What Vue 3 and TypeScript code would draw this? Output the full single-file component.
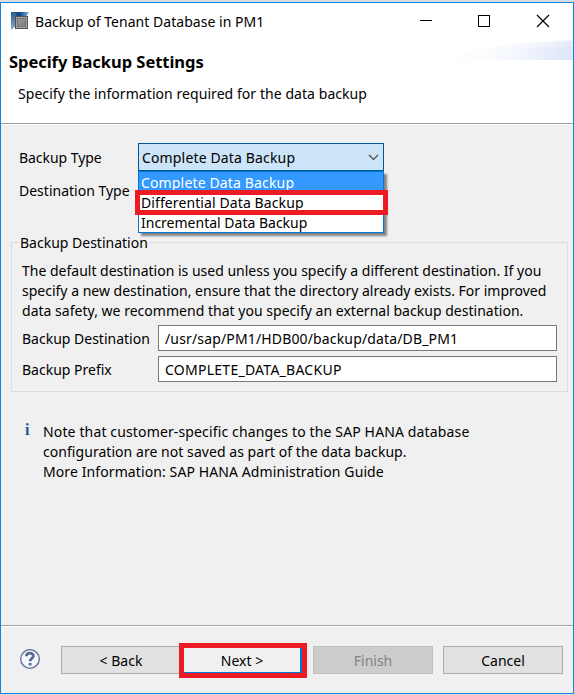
<script setup lang="ts">
import { ref } from 'vue'

const backupTypes = ['Complete Data Backup', 'Differential Data Backup', 'Incremental Data Backup']
const backupType = ref(backupTypes[0])
const destination = ref('/usr/sap/PM1/HDB00/backup/data/DB_PM1')
const prefix = ref('COMPLETE_DATA_BACKUP')
</script>

<template>
  <div class="screen">
    <div class="window">
      <header class="banner">
        <div class="titlebar">
          <svg class="app-icon" width="18" height="18" viewBox="0 0 18 18">
            <defs>
              <linearGradient id="sky" x1="0" y1="0" x2="1" y2="0">
                <stop offset="0" stop-color="#2a5a8c" />
                <stop offset=".5" stop-color="#12478a" />
                <stop offset="1" stop-color="#8db4d6" />
              </linearGradient>
              <linearGradient id="edge" x1="0" y1="0" x2="0" y2="1">
                <stop offset="0" stop-color="#2a5a8c" />
                <stop offset="1" stop-color="#8fb2cf" />
              </linearGradient>
              <linearGradient id="steel" x1="0" y1="0" x2="1" y2="1">
                <stop offset="0" stop-color="#9c9c9c" />
                <stop offset="1" stop-color="#7c7c7c" />
              </linearGradient>
            </defs>
            <path d="M0 0H18L15 5H0Z" fill="url(#sky)" />
            <path d="M0 0H5V14L0 18Z" fill="url(#edge)" />
            <rect x="4" y="4" width="13" height="13" fill="#505458" />
            <rect x="5" y="5" width="11" height="11" fill="#a3a3a3" />
            <rect x="6.5" y="6.5" width="8" height="8" fill="url(#steel)" stroke="#747474" />
          </svg>
          <span class="title">Backup of Tenant Database in PM1</span>
          <svg class="controls" width="130" height="14" viewBox="0 0 130 14" fill="none" stroke="#000" shape-rendering="crispEdges">
            <path d="M0 6.5H12" />
            <rect x="58.5" y="1.5" width="11" height="11" />
            <path d="M117 1L129 13M129 1L117 13" shape-rendering="auto" stroke-width="1.2" />
          </svg>
        </div>
        <svg class="swoosh" width="138" height="20" viewBox="0 0 138 20">
          <defs>
            <linearGradient id="haze" x1="0" y1="0" x2="1" y2="0">
              <stop offset="0" stop-color="#fff" />
              <stop offset=".4" stop-color="#fbfcfe" />
              <stop offset="1" stop-color="#ebf0fb" />
            </linearGradient>
            <linearGradient id="wave" x1="0" y1="0" x2="1" y2="0">
              <stop offset="0" stop-color="#f8faff" stop-opacity="0" />
              <stop offset="1" stop-color="#dce3f8" />
            </linearGradient>
          </defs>
          <path d="M0 20Q55 3 138 0V20Z" fill="url(#haze)" />
          <path d="M45 20Q85 6 138 1V20Z" fill="url(#wave)" opacity=".4" />
          <path d="M48 20V13Q90 7 138 7V20Z" fill="url(#wave)" opacity=".75" />
        </svg>
        <h1>Specify Backup Settings</h1>
        <p class="subtitle">Specify the information required for the data backup</p>
      </header>

      <main>
        <div class="row type-row">
          <label>Backup Type</label>
          <div class="combo">
            <span class="wide">{{ backupType }}</span>
            <svg width="11" height="7" viewBox="0 0 11 7" fill="none" stroke="#444" stroke-width="1.1">
              <path d="M1 1L5.5 5.5L10 1" />
            </svg>
            <ul class="list">
              <li
                v-for="(name, i) in backupTypes"
                :key="name"
                :class="{ selected: name === backupType, wide: i === 0, roomy: i === 1 }"
                @click.stop="backupType = name"
              >{{ name }}</li>
            </ul>
            <div class="mark mark-option"></div>
          </div>
        </div>
        <div class="row dest-type"><label>Destination Type</label></div>

        <section class="group">
          <h2>Backup Destination</h2>
          <p class="description">
            <span>The default destination is used unless you specify a different destination. If you</span>
            <span>specify a new destination, ensure that the directory already exists. For improved</span>
            <span class="d3">data safety, we recommend that you specify an external backup destination.</span>
          </p>
          <div class="field">
            <label>Backup Destination</label>
            <input v-model="destination" class="path" type="text" spellcheck="false" />
          </div>
          <div class="field">
            <label>Backup Prefix</label>
            <input v-model="prefix" class="prefix" type="text" spellcheck="false" />
          </div>
        </section>

        <div class="note">
          <span class="info">i</span>
          <p>
            <span class="n1">Note that customer-specific changes to the SAP HANA database</span>
            <span class="n2">configuration are not saved as part of the data backup.</span>
            <span class="n3">More Information: SAP HANA Administration Guide</span>
          </p>
        </div>
      </main>

      <footer>
        <svg class="help" width="22" height="22" viewBox="0 0 22 22" fill="none" stroke="#566b93">
          <circle cx="11" cy="11" r="9.3" fill="#f6f7fa" stroke-width="1.3" />
          <path d="M7.4 8.3C7.4 4 14.4 4.2 14.4 8C14.4 10.4 11.1 10.4 11.1 13.2" stroke-width="2.7" />
          <path d="M9.7 16.2H12.5" stroke-width="2.6" />
        </svg>
        <button type="button" class="back">&lt; Back</button>
        <div class="next-wrap">
          <button type="button" class="next">Next &gt;</button>
          <div class="mark mark-next"></div>
        </div>
        <button type="button" class="finish" disabled>Finish</button>
        <button type="button" class="cancel">Cancel</button>
      </footer>
    </div>
  </div>
</template>

<style>
body {
  overflow: hidden;
}
</style>

<style scoped>
.screen,
.screen * {
  box-sizing: border-box;
}
.screen {
  width: 574px;
  height: 695px;
  padding: 2px 0 1px;
  background: #d9dce0;
  font: 14px/20px "Noto Sans", "Open Sans", sans-serif;
  color: #000;
}
h1, h2, p, ul {
  margin: 0;
  padding: 0;
}
.window {
  display: flex;
  flex-direction: column;
  height: 692px;
  border: 1px solid #1883d7;
  background: #f0f0f0;
}
.banner {
  position: relative;
  height: 122px;
  background: #fff;
  border-bottom: 1px solid #fff;
  box-shadow: inset 0 -1px #a0a0a0;
}
.titlebar {
  display: flex;
  align-items: flex-start;
  height: 37px;
  padding: 9px 23px 0 10px;
}
.app-icon {
  flex: none;
}
.title {
  flex: 1;
  margin-left: 6px;
  letter-spacing: 0.03px;
}
.controls {
  margin-top: 2px;
}
.swoosh {
  position: absolute;
  top: 37px;
  right: 0;
}
h1 {
  position: relative;
  margin: 12px 0 0 8px;
  font-size: 16.5px;
  font-weight: 700;
  line-height: 20px;
  letter-spacing: -0.04px;
}
.subtitle {
  margin: 12px 0 0 17px;
  letter-spacing: 0.06px;
}
main {
  flex: 1;
  padding: 18px 5px 0 10px;
}
.row {
  display: flex;
  align-items: center;
  padding-left: 8px;
}
.row label {
  width: 119px;
}
.type-row label {
  padding-top: 2px;
  letter-spacing: -0.05px;
}
.dest-type {
  margin-top: 10px;
}
.combo {
  position: relative;
  display: flex;
  align-items: center;
  justify-content: space-between;
  width: 246px;
  height: 28px;
  padding: 1px 4px 0 3px;
  border: 1px solid #00559b;
  background: #cce4f7;
}
.wide {
  letter-spacing: 0.15px;
}
.roomy {
  letter-spacing: 0.1px;
}
.list {
  position: absolute;
  z-index: 1;
  top: 27px;
  left: -1px;
  width: 246px;
  height: 62px;
  border: 1px solid #0078d7;
  background: #fff;
  box-shadow: 3px 3px 2px rgba(0, 0, 0, 0.45);
  list-style: none;
}
.list li {
  height: 20px;
  padding-left: 2px;
  line-height: 21px;
}
.list .selected {
  background: #3399ff;
  color: #fff;
}
.mark {
  position: absolute;
  z-index: 2;
  border: 5px solid #ed1c24;
  pointer-events: none;
}
.mark-option {
  top: 46px;
  left: -4px;
  width: 253px;
  height: 25px;
}
.group {
  margin-top: 41px;
  height: 150px;
  padding: 0 10px;
  border: 1px solid #dcdcdc;
}
h2 {
  width: max-content;
  margin: -10px 0 0 -4px;
  padding: 0 2px;
  background: #f0f0f0;
  font-size: 14px;
  font-weight: 400;
  line-height: 20px;
}
.description {
  margin-top: 8px;
}
.description span,
.note p span {
  display: block;
  white-space: nowrap;
}
.d3 {
  letter-spacing: 0.02px;
}
.field {
  display: flex;
  align-items: center;
  margin-top: 5px;
}
.description + .field {
  margin-top: 4px;
}
.field label {
  width: 136px;
  padding-top: 2px;
}
.field input {
  flex: 1;
  height: 26px;
  padding: 1px 6px 0;
  border: 1px solid #7a7a7a;
  border-radius: 0;
  outline: none;
  background: #fff;
  color: #000;
  font: inherit;
}
.field .path {
  letter-spacing: 0.15px;
}
.field .prefix {
  letter-spacing: 0.26px;
}
.note {
  display: flex;
  margin-top: 30px;
}
.info {
  width: 32px;
  padding-left: 14px;
  color: #1c5694;
  font: bold 16px/15px "Liberation Serif", serif;
}
.n1 {
  letter-spacing: 0.14px;
}
.n2 {
  letter-spacing: 0.05px;
}
.n3 {
  letter-spacing: 0.1px;
}
footer {
  display: flex;
  height: 68px;
  padding: 20px 10px 0 18px;
  border-top: 1px solid #a0a0a0;
  box-shadow: inset 0 1px #fff;
}
.help {
  margin: 2px 20px 0 0;
}
button {
  width: 120px;
  height: 28px;
  padding: 1px 0 0;
  border: 1px solid #adadad;
  border-radius: 0;
  background: #e1e1e1;
  color: #000;
  font: inherit;
}
.next-wrap {
  position: relative;
  margin-left: 1px;
}
.next {
  border: 2px solid #0078d7;
  background: #f0f0f0;
}
.mark-next {
  top: -3px;
  left: -3px;
  width: 128px;
  height: 35px;
}
.finish {
  margin-left: 11px;
  border-color: #bfbfbf;
  background: #ccc;
  color: #838383;
}
.cancel {
  margin-left: 10px;
}
</style>
